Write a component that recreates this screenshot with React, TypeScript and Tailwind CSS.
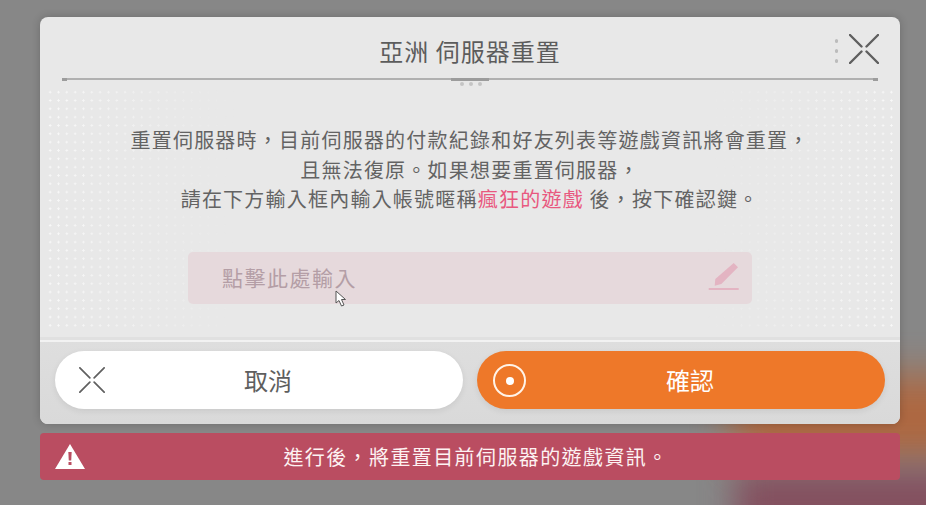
import React from "react";

const X = ({ size, stroke = "#5f5f5f", width = 2.4 }: { size: number; stroke?: string; width?: number }) => (
  <svg width={size} height={size} viewBox="0 0 30 30" fill="none">
    <path d="M1 1 L12.5 12.5 M29 1 L17.5 12.5 M1 29 L12.5 17.5 M29 29 L17.5 17.5" stroke={stroke} strokeWidth={width} strokeLinecap="round" />
  </svg>
);

const Dots = ({ side }: { side: "l" | "r" }) => (
  <div
    className={
      side === "l"
        ? "absolute left-[6px] top-[8px] bottom-[6px] w-[190px] opacity-90 bg-[radial-gradient(circle,#fafafa_0.9px,transparent_1.15px)] bg-[length:8.33px_8.33px] [mask-image:linear-gradient(to_right,black,transparent)]"
        : "absolute right-[6px] top-[8px] bottom-[6px] w-[190px] opacity-90 bg-[radial-gradient(circle,#fafafa_0.9px,transparent_1.15px)] bg-[length:8.33px_8.33px] [mask-image:linear-gradient(to_left,black,transparent)]"
    }
  />
);

export default function App() {
  return (
    <div className="relative w-[926px] h-[505px] overflow-hidden bg-[#878787] pt-[17px] pl-[40px] pr-[26px] font-['Noto_Sans_CJK_TC','Noto_Sans',sans-serif]">
      <div className="absolute left-[730px] top-[375px] w-[280px] h-[85px] rounded-[30px] bg-[#b8602f] opacity-80 blur-[20px]" />
      <div className="absolute left-[735px] top-[470px] w-[260px] h-[70px] bg-[#84505f] blur-[16px]" />

      <div className="relative h-[407px] rounded-[8px] bg-[#e8e8e8] flex flex-col overflow-hidden shadow-[0_0_8px_rgba(0,0,0,0.2)]">
        <header className="relative h-[61px] shrink-0 flex items-center justify-center">
          <h1 className="text-[24px] leading-[30px] font-normal tracking-[1px] text-[#5c5c5c] mt-[6px]">亞洲 伺服器重置</h1>
          <div className="absolute right-[62px] top-[22px] flex flex-col gap-[6.5px]">
            <span className="w-[3.5px] h-[3.5px] rounded-full bg-[#bcbcbc]" />
            <span className="w-[3.5px] h-[3.5px] rounded-full bg-[#bcbcbc]" />
            <span className="w-[3.5px] h-[3.5px] rounded-full bg-[#bcbcbc]" />
          </div>
          <div className="absolute right-[21px] top-[17px]">
            <X size={30} />
          </div>
        </header>

        <div className="relative h-[2px] mx-[22px] shrink-0 flex items-center justify-between bg-[#b0b0b0]">
          <span className="w-[5px] h-[3px] bg-[#9c9c9c]" />
          <span className="w-[38px] h-[3px] bg-[#9c9c9c]" />
          <span className="w-[5px] h-[3px] bg-[#9c9c9c]" />
          <div className="absolute left-[398px] top-[4px] flex gap-[5px]">
            <span className="w-[4px] h-[4px] rounded-full bg-[#c4c4c4]" />
            <span className="w-[4px] h-[4px] rounded-full bg-[#c4c4c4]" />
            <span className="w-[4px] h-[4px] rounded-full bg-[#c4c4c4]" />
          </div>
        </div>

        <main className="relative flex-1 flex flex-col items-center pt-[45px] border-b-[3px] border-b-[#e0e0e0]">
          <Dots side="l" />
          <Dots side="r" />
          <p className="relative text-center text-[20px] leading-[29.5px] tracking-[1.22px] text-[#636363]">
            重置伺服器時，目前伺服器的付款紀錄和好友列表等遊戲資訊將會重置，
            <br />
            且無法復原。如果想要重置伺服器，
            <br />
            請在下方輸入框內輸入帳號暱稱<span className="text-[#e8587f]">瘋狂的遊戲</span> 後，按下確認鍵。
          </p>
          <div className="relative w-[564px] h-[52px] mt-[38px] rounded-[5px] bg-[#e6d9dc] flex items-center justify-between pl-[34px] pr-[12px]">
            <span className="text-[21px] tracking-[1.5px] text-[#b49ea6]">點擊此處輸入</span>
            <svg width="32" height="30" viewBox="0 0 32 30" fill="none">
              <path d="M25.7 0 L30 4.3 L13.3 21 L6.7 22.7 L7.3 16 Z" fill="#e3b4c2" />
              <path d="M0.7 26 H30.7" stroke="#e3b4c2" strokeWidth="2" />
            </svg>
            <svg className="absolute left-[147px] top-[38px]" width="13" height="17" viewBox="0 0 13 17">
              <path d="M1 1 V13 L4 10.5 L6.5 16 L9 15 L6.5 9.5 L10.5 9.5 Z" fill="#fff" stroke="#555" strokeWidth="1" />
            </svg>
          </div>
        </main>

        <footer className="h-[84px] shrink-0 border-t-[2px] border-t-[#f2f2f2] bg-gradient-to-b from-[#dedede] to-[#d9d9d9] flex gap-[14px] px-[15px] pt-[9px]">
          <button className="relative w-[408px] h-[58px] pl-[18px] rounded-full bg-white flex items-center justify-center text-[24px] text-[#5e5e5e] shadow-[0_2px_6px_rgba(0,0,0,0.08)]">
            <span className="absolute left-[24px] top-[16px]">
              <X size={26} stroke="#606060" width={2} />
            </span>
            取消
          </button>
          <button className="relative w-[408px] h-[58px] pl-[18px] rounded-full bg-[#ee7829] flex items-center justify-center text-[24px] text-white shadow-[0_2px_6px_rgba(0,0,0,0.08)]">
            <span className="absolute left-[16px] top-[13px] w-[33px] h-[33px] rounded-full border-[2px] border-[#fff3e8] flex items-center justify-center">
              <span className="w-[8px] h-[8px] rounded-full bg-white" />
            </span>
            確認
          </button>
        </footer>
      </div>

      <div className="relative mt-[9px] h-[47px] pl-[12px] rounded-[4px] bg-[#ba4d61] flex items-center justify-center text-[20px] tracking-[1.4px] text-[#fdf2f2]">
        <svg className="absolute left-[15px] top-[11px]" width="30" height="25" viewBox="0 0 30 25">
          <path d="M15 0 L30 25 H0 Z" fill="#fff" />
          <path d="M13.3 8 H16.7 L16.2 16.5 H13.8 Z" fill="#ba4d61" />
          <rect x="13.5" y="18" width="3" height="3" fill="#ba4d61" />
        </svg>
        進行後，將重置目前伺服器的遊戲資訊。
      </div>
    </div>
  );
}
